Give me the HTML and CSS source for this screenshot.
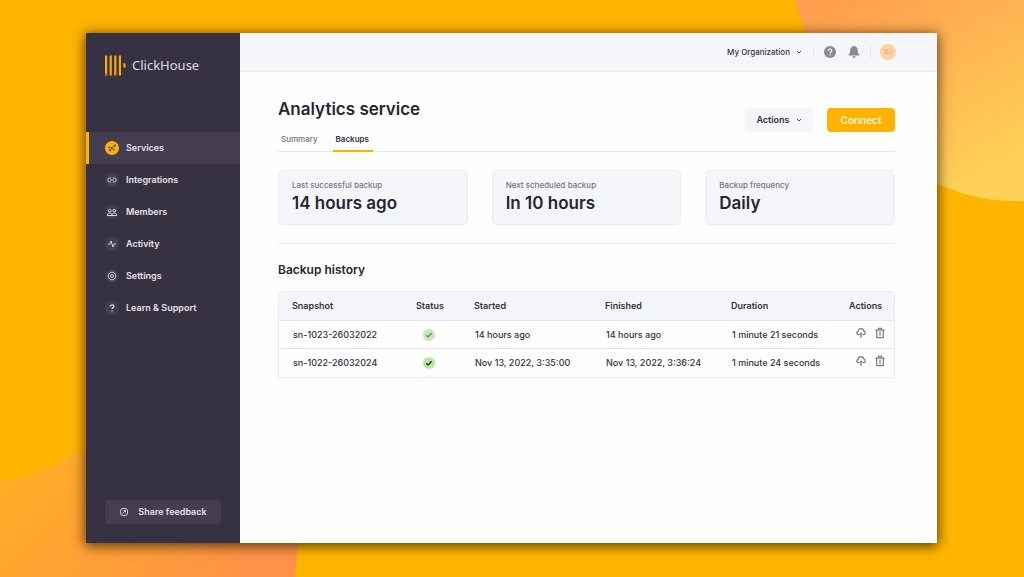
FILE: index.html
```html
<!DOCTYPE html>
<html lang="en">
<head>
<meta charset="utf-8">
<meta name="viewport" content="width=device-width, initial-scale=1">
<title>ClickHouse – Analytics service</title>
<link rel="stylesheet" href="styles.css">
</head>
<body>
<svg class="backdrop" viewBox="0 0 1024 577" preserveAspectRatio="none" aria-hidden="true">
  <defs>
    <linearGradient id="glow-top" x1="0.1" y1="0" x2="0.7" y2="1"><stop offset="0" stop-color="#ff9d4e"/><stop offset="1" stop-color="#ffd257"/></linearGradient>
    <linearGradient id="glow-bottom" x1="0" y1="0.3" x2="1" y2="0.8"><stop offset="0" stop-color="#ffae25"/><stop offset="1" stop-color="#ff914a"/></linearGradient>
  </defs>
  <path fill="url(#glow-top)" d="M795 0C822 95 900 201 1015 201H1024V0Z"/>
  <path fill="url(#glow-bottom)" d="M0 480C35 480 60 462 86 448C180 400 308 430 298 543L295 577H0Z"/>
</svg>
<div class="window">
  <aside class="sidebar">
    <a class="brand" href="#">
      <svg class="brand-mark" viewBox="0 0 21 21" aria-hidden="true"><g fill="#f5aa0a"><path d="M0 .5h2.200v20H0zM4.600.5h2.200v20H4.600zM9.200.5h2.200v20H9.200zM13.800.5H16v20h-2.200z"/><path d="M18.300 8.300h2.200v4.400h-2.200z"/></g><path fill="#e05a1c" d="M0 18.500h2.200v2H0z"/></svg>
      <span>ClickHouse</span>
    </a>
    <nav class="nav">
      <a class="nav-item active" href="#"><svg class="nav-icon" viewBox="0 0 14 14"><circle cx="7" cy="7" r="7" fill="#ffb300"/><g fill="#3a3443" stroke="#3a3443" stroke-width=".6"><path fill="none" d="M4.200 6.500L7 7l2.600-2.800M7 7L5 9.200M7 7l2 1.800"/><circle cx="4.200" cy="6.400" r=".6"/><circle cx="9.700" cy="4.600" r=".8"/><circle cx="7" cy="7" r=".7"/><circle cx="5" cy="9.200" r=".8"/><circle cx="9" cy="8.800" r=".5"/></g></svg>Services</a>
      <a class="nav-item" href="#"><svg class="nav-icon" viewBox="0 0 14 14"><circle class="disc" cx="7" cy="7" r="7"/><path class="line" d="M6.200 5H4.800a2 2 0 0 0 0 4h1.400M7.800 5h1.400a2 2 0 0 1 0 4H7.800M5.200 7h3.600"/></svg>Integrations</a>
      <a class="nav-item" href="#"><svg class="nav-icon" viewBox="0 0 14 14"><circle class="disc" cx="7" cy="7" r="7"/><g class="line"><circle cx="4.800" cy="5.800" r="1.400"/><circle cx="9.200" cy="5.800" r="1.400"/><path d="M2.400 10.500c0-3.400 4.600-3.400 4.600 0zM7 10.500c0-3.400 4.600-3.400 4.600 0z"/></g></svg>Members</a>
      <a class="nav-item" href="#"><svg class="nav-icon" viewBox="0 0 14 14"><circle class="disc" cx="7" cy="7" r="7"/><path class="line" d="M3 7.300h1.700L6 4l2 6 1.300-3.200H11"/></svg>Activity</a>
      <a class="nav-item" href="#"><svg class="nav-icon" viewBox="0 0 14 14"><circle class="disc" cx="7" cy="7" r="7"/><g class="line"><path d="M6.200 3.200h1.600l1.500.8 1 1.300.5 1.700-.5 1.700-1 1.300-1.500.8H6.200L4.700 10l-1-1.300L3.200 7l.5-1.700 1-1.300z"/><circle cx="7" cy="7" r="1.500"/></g></svg>Settings</a>
      <a class="nav-item" href="#"><svg class="nav-icon" viewBox="0 0 14 14"><circle class="disc" cx="7" cy="7" r="7"/><path class="line bold" d="M5.400 5.500c0-2.200 3.400-2.100 3.400 0C8.800 6.800 7.100 6.700 7.100 8M7.100 9.600v1"/></svg>Learn &amp; Support</a>
    </nav>
    <button class="feedback" type="button"><svg viewBox="0 0 10 10"><circle class="line" cx="5" cy="5" r="3.800"/><path class="line" d="M3.600 6.500l2.700-2.800M4.600 3.600h1.800v1.800"/></svg>Share feedback</button>
  </aside>
  <div class="page">
    <header class="topbar">
      <button class="org" type="button">My Organization<svg class="chevron" viewBox="0 0 6 6"><path d="M1 2l2 2 2-2"/></svg></button>
      <div class="tools">
        <button class="tool" type="button" aria-label="Help"><svg viewBox="0 0 12 12"><circle cx="6" cy="6" r="6" fill="#8c8993"/><path fill="none" stroke="#f6f7fa" stroke-width="1.300" d="M4.300 4.800c0-2.300 3.400-2.100 3.400 0C7.700 6 6 6 6 7.300M6 8.300v1.200"/></svg></button>
        <button class="tool" type="button" aria-label="Notifications"><svg viewBox="0 0 12 12"><path fill="#8c8993" d="M6 0c2.600.3 3.800 2 3.800 4.200 0 2.700.5 3.300 1.500 4.300v1.100H.7V8.500c1-1 1.500-1.600 1.500-4.300C2.200 2 3.400.3 6 0zM4.300 10.300h3.400c-.2 2.100-3.200 2.100-3.400 0z"/></svg></button>
      </div>
      <button class="avatar" type="button">GJ</button>
    </header>
    <main class="content">
      <div class="heading">
        <div>
          <h1>Analytics service</h1>
          <nav class="tabs"><a href="#">Summary</a><a class="current" href="#">Backups</a></nav>
        </div>
        <div class="buttons">
          <button class="btn" type="button">Actions<svg class="chevron" viewBox="0 0 6 6"><path d="M1 2l2 2 2-2"/></svg></button>
          <button class="btn primary" type="button">Connect</button>
        </div>
      </div>
      <section class="cards">
        <div class="card"><p>Last successful backup</p><strong>14 hours ago</strong></div>
        <div class="card"><p>Next scheduled backup</p><strong>In 10 hours</strong></div>
        <div class="card"><p>Backup frequency</p><strong>Daily</strong></div>
      </section>
      <section class="history">
        <h2>Backup history</h2>
        <table>
          <colgroup><col class="c-snapshot"><col class="c-status"><col class="c-started"><col class="c-finished"><col class="c-duration"><col></colgroup>
          <thead><tr><th>Snapshot</th><th>Status</th><th>Started</th><th>Finished</th><th>Duration</th><th>Actions</th></tr></thead>
          <tbody>
            <tr>
              <td>sn-1023-26032022</td>
              <td class="status"><svg viewBox="0 0 12 12" role="img" aria-label="Success"><circle cx="6" cy="6" r="6" fill="#c6e8b5"/><path fill="none" stroke="#74816f" stroke-width="1.300" d="M3.300 6.200l1.800 1.700 3.500-3.600"/></svg></td>
              <td>14 hours ago</td><td>14 hours ago</td><td>1 minute 21 seconds</td>
              <td class="actions"><div>
                <button type="button" aria-label="Restore"><svg viewBox="0 0 10 12"><path d="M3.200 7.600H2.400C.4 7.600.2 4.800 2.200 4.500 2.400 1 7.200.8 7.700 3.900c2.200.3 2 3.700-.1 3.700h-.8M5 11V6"/><path class="solid" d="M3 7.500L5 5.200l2 2.300z"/></svg></button>
                <button type="button" aria-label="Delete"><svg viewBox="0 0 10 12"><path d="M.5 3.200h9M3.500 3V1.400h3V3M1.700 3.500v7.100h6.600V3.500M5 4.500v4.700"/></svg></button>
              </div></td>
            </tr>
            <tr>
              <td>sn-1022-26032024</td>
              <td class="status"><svg viewBox="0 0 12 12" role="img" aria-label="Success"><circle cx="6" cy="6" r="6" fill="#b9e5a3"/><path fill="none" stroke="#29342c" stroke-width="1.400" d="M3.300 6.200l1.800 1.700 3.500-3.600"/></svg></td>
              <td>Nov 13, 2022, 3:35:00</td><td>Nov 13, 2022, 3:36:24</td><td>1 minute 24 seconds</td>
              <td class="actions"><div>
                <button type="button" aria-label="Restore"><svg viewBox="0 0 10 12"><path d="M3.200 7.600H2.400C.4 7.600.2 4.800 2.200 4.500 2.400 1 7.200.8 7.700 3.900c2.200.3 2 3.700-.1 3.700h-.8M5 11V6"/><path class="solid" d="M3 7.500L5 5.200l2 2.300z"/></svg></button>
                <button type="button" aria-label="Delete"><svg viewBox="0 0 10 12"><path d="M.5 3.200h9M3.500 3V1.400h3V3M1.700 3.500v7.100h6.600V3.500M5 4.500v4.700"/></svg></button>
              </div></td>
            </tr>
          </tbody>
        </table>
      </section>
    </main>
  </div>
</div>
</body>
</html>
```
FILE: styles.css
```css
*, *::before, *::after { box-sizing: border-box; }

body {
  margin: 0;
  min-height: 100vh;
  padding: 33px 87px 34px 86px;
  display: flex;
  background: #ffb500;
  color: #35313f;
  font: 500 9px/12px Inter, "Liberation Sans", sans-serif;
}
h1, h2, p { margin: 0; }
h1, h2, strong { color: #282433; font-weight: 600; }
a { color: inherit; text-decoration: none; }
button { margin: 0; padding: 0; border: 0; background: none; color: inherit; font: inherit; cursor: pointer; }
svg { display: block; flex: none; }

.backdrop { position: absolute; inset: 0; width: 100%; height: 100%; z-index: -1; }

.window {
  flex: 1;
  min-width: 0;
  display: flex;
  background: #fefefe;
  box-shadow: 0 2px 12px 1px rgba(50, 30, 0, .8);
}

.sidebar {
  flex: none;
  width: 154px;
  display: flex;
  flex-direction: column;
  background: #373242;
  color: #e4e2e8;
  font-weight: 600;
}
.brand {
  display: flex;
  align-items: center;
  gap: 6px;
  height: 64px;
  padding-left: 19px;
  color: #dedce2;
  font: 400 13px/20px "Noto Sans", "Open Sans", sans-serif;
}
.brand-mark { width: 21px; height: 21px; }
.nav { flex: 1; margin-top: 35px; }
.nav-item {
  display: flex;
  align-items: center;
  gap: 7px;
  height: 32px;
  padding-left: 19px;
}
.nav-item.active { padding-left: 16px; border-left: 3px solid #ffb300; background: #443e50; }
.nav-icon { width: 14px; height: 14px; }
.disc { fill: #443f4f; }
.line { fill: none; stroke: #d6d3db; stroke-width: 1; }
.bold { stroke-width: 1.4; }
.feedback {
  display: flex;
  align-items: center;
  justify-content: center;
  gap: 9px;
  height: 24px;
  margin: 0 19px 19px;
  border-radius: 4px;
  background: #443e50;
}
.feedback svg { width: 10px; height: 10px; }

.page { flex: 1; min-width: 0; }
.topbar {
  display: flex;
  align-items: center;
  justify-content: flex-end;
  height: 39px;
  padding-right: 41px;
  border-bottom: 1px solid #eeeff3;
  background: #f5f6fa;
}
.org { display: flex; align-items: center; gap: 6px; padding-right: 11px; font-size: 8px; }
.chevron { width: 6px; height: 6px; fill: none; stroke: #5d5965; stroke-width: 1; }
.tools {
  display: flex;
  gap: 12px;
  padding: 0 10px;
  border: solid #e7e7eb;
  border-width: 0 1px;
}
.tool svg { width: 12px; height: 12px; }
.avatar {
  width: 16px;
  height: 16px;
  margin-left: 9px;
  border-radius: 50%;
  background: #fbd3a5;
  color: #f5a873;
  font-size: 6px;
  font-weight: 600;
}

.content { padding: 26px 42px 26px 38px; }
.heading {
  display: flex;
  justify-content: space-between;
  border-bottom: 1px solid #e9e9ed;
}
h1 { font-size: 17px; line-height: 22px; }
.tabs { display: flex; gap: 11px; margin: 10px 0 -1px; color: #77747f; font-size: 8px; }
.tabs a { padding: 3px 4px 5px 3px; border-bottom: 2px solid transparent; }
.tabs .current { border-color: #ffb300; color: #35313f; font-weight: 600; }
.buttons { display: flex; gap: 14px; padding-top: 10px; }
.btn {
  display: flex;
  align-items: center;
  justify-content: center;
  gap: 6px;
  width: 68px;
  height: 24px;
  border-radius: 4px;
  background: #f5f6fa;
  font-weight: 600;
}
.primary { background: #ffb300; color: #fff5dc; font-size: 10px; }

.cards {
  display: grid;
  grid-template-columns: repeat(3, 1fr);
  gap: 24px;
  padding: 18px 0;
  border-bottom: 1px solid #e9e9ed;
}
.card {
  padding: 8px 13px 9px;
  border: 1px solid #ecedf1;
  border-radius: 5px;
  background: #f5f6fa;
}
.card p { color: #77747f; font-size: 8px; }
.card strong { display: block; font-size: 17px; line-height: 24px; }

h2 { margin: 18px 0 13px; font-size: 12px; line-height: 16px; }
table {
  width: 100%;
  table-layout: fixed;
  border: 1px solid #ececf0;
  border-radius: 4px 4px 0 0;
  border-spacing: 0;
}
.c-snapshot { width: 124px; }
.c-status { width: 58px; }
.c-started { width: 131px; }
.c-finished { width: 126px; }
.c-duration { width: 118px; }
th, td { height: 29px; padding: 0 0 0 13px; text-align: left; white-space: nowrap; }
th { border-bottom: 1px solid #e5e6ea; background: #f5f6fa; font-weight: 600; }
td { height: 28px; padding-left: 14px; }
tbody tr:first-child td { border-bottom: 1px solid #e5e6ea; }
.status svg { width: 12px; height: 12px; margin-left: 6px; }
.actions div { display: flex; gap: 9px; padding: 0 0 4px 6px; }
.actions svg { width: 10px; height: 12px; fill: none; stroke: #817e88; stroke-width: 1.3; }
.actions .solid { fill: #817e88; stroke: none; }
```
